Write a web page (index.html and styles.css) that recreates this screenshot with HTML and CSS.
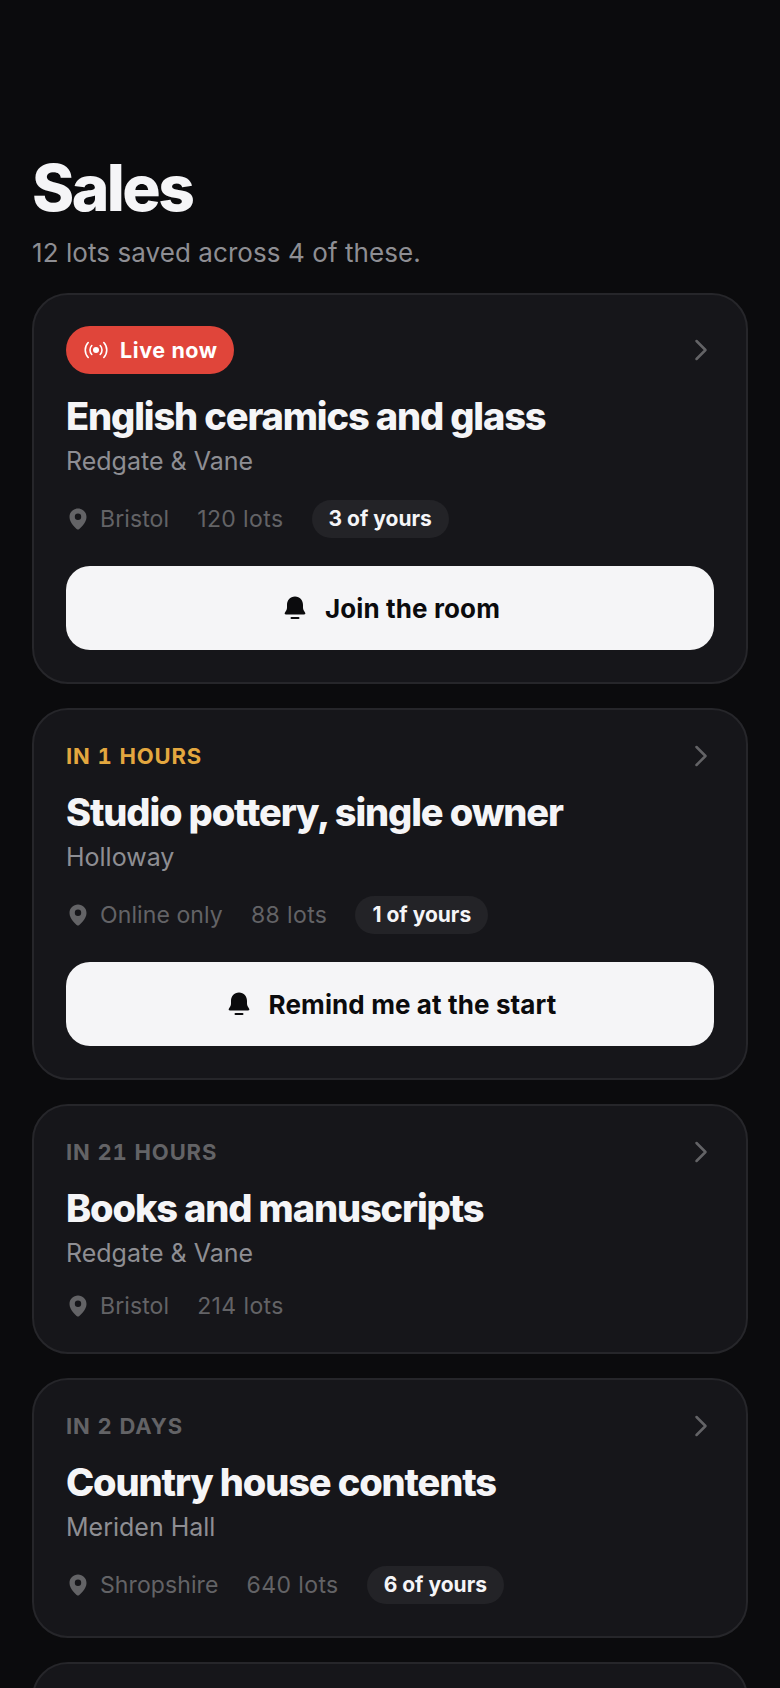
FILE: index.html
```html
<!DOCTYPE html>
<html lang="en">
<head>
<meta charset="utf-8">
<title>Sales</title>
<link rel="stylesheet" href="styles.css">
</head>
<body>
<main class="page">
  <header class="header">
    <h1 class="title">Sales</h1>
    <p class="subtitle">12 lots saved across 4 of these.</p>
  </header>
  <section class="list">
    <article class="card">
      <div class="card-head">
        <span class="pill-live">
          <svg class="icon-live" viewBox="0 0 24 24" fill="none" stroke="currentColor" stroke-width="1.6" stroke-linecap="round"><circle cx="12" cy="12" r="3" fill="currentColor" stroke="none"/><path d="M7.800 7.500a6.500 6.500 0 0 0 0 9"/><path d="M16.200 7.500a6.500 6.500 0 0 1 0 9"/><path d="M4.200 4.500a11 11 0 0 0 0 15"/><path d="M19.800 4.500a11 11 0 0 1 0 15"/></svg>
          Live now
        </span>
        <svg class="chevron" viewBox="0 0 14 22" fill="none" stroke="currentColor" stroke-width="2.5" stroke-linecap="round" stroke-linejoin="round"><path d="M2.500 2 11.500 11l-9 9"/></svg>
      </div>
      <h2 class="card-title">English ceramics and glass</h2>
      <p class="house">Redgate &amp; Vane</p>
      <div class="meta">
        <span class="place"><svg class="pin" viewBox="0 0 24 24" fill="currentColor"><path fill-rule="evenodd" d="M12 1.500c-4.700 0-8.500 3.700-8.500 8.400 0 5.700 6.400 11.400 7.500 12.300.6.500 1.400.5 2 0 1.100-.9 7.500-6.600 7.500-12.300 0-4.700-3.800-8.400-8.500-8.400Zm0 11.500a3.200 3.200 0 1 1 0-6.400 3.200 3.200 0 0 1 0 6.400Z"/></svg>Bristol</span>
        <span class="lots">120 lots</span>
        <span class="tag">3 of yours</span>
      </div>
      <button class="action" type="button"><svg class="bell" viewBox="0 0 24 24" fill="currentColor"><path d="M12 .5c-5 0-8 4-8 8.500v2.500c0 2-1 3.500-2 5-.7 1-.3 2 1 2h18c1.300 0 1.700-1 1-2-1-1.500-2-3-2-5V9c0-4.500-3-8.500-8-8.500Z"/><rect x="7.500" y="21" width="9" height="2" rx="1"/></svg>Join the room</button>
    </article>

    <article class="card">
      <div class="card-head">
        <span class="when when-soon">IN 1 HOURS</span>
        <svg class="chevron" viewBox="0 0 14 22" fill="none" stroke="currentColor" stroke-width="2.5" stroke-linecap="round" stroke-linejoin="round"><path d="M2.500 2 11.500 11l-9 9"/></svg>
      </div>
      <h2 class="card-title">Studio pottery, single owner</h2>
      <p class="house">Holloway</p>
      <div class="meta">
        <span class="place"><svg class="pin" viewBox="0 0 24 24" fill="currentColor"><path fill-rule="evenodd" d="M12 1.500c-4.700 0-8.500 3.700-8.500 8.400 0 5.700 6.400 11.400 7.500 12.300.6.500 1.400.5 2 0 1.100-.9 7.500-6.600 7.500-12.300 0-4.700-3.800-8.400-8.500-8.400Zm0 11.500a3.200 3.200 0 1 1 0-6.400 3.200 3.200 0 0 1 0 6.400Z"/></svg>Online only</span>
        <span class="lots">88 lots</span>
        <span class="tag">1 of yours</span>
      </div>
      <button class="action" type="button"><svg class="bell" viewBox="0 0 24 24" fill="currentColor"><path d="M12 .5c-5 0-8 4-8 8.500v2.500c0 2-1 3.500-2 5-.7 1-.3 2 1 2h18c1.300 0 1.700-1 1-2-1-1.500-2-3-2-5V9c0-4.500-3-8.500-8-8.500Z"/><rect x="7.500" y="21" width="9" height="2" rx="1"/></svg>Remind me at the start</button>
    </article>

    <article class="card">
      <div class="card-head">
        <span class="when">IN 21 HOURS</span>
        <svg class="chevron" viewBox="0 0 14 22" fill="none" stroke="currentColor" stroke-width="2.5" stroke-linecap="round" stroke-linejoin="round"><path d="M2.500 2 11.500 11l-9 9"/></svg>
      </div>
      <h2 class="card-title">Books and manuscripts</h2>
      <p class="house">Redgate &amp; Vane</p>
      <div class="meta">
        <span class="place"><svg class="pin" viewBox="0 0 24 24" fill="currentColor"><path fill-rule="evenodd" d="M12 1.500c-4.700 0-8.500 3.700-8.500 8.400 0 5.700 6.400 11.400 7.500 12.300.6.500 1.400.5 2 0 1.100-.9 7.500-6.600 7.500-12.300 0-4.700-3.800-8.400-8.500-8.400Zm0 11.500a3.200 3.200 0 1 1 0-6.400 3.200 3.200 0 0 1 0 6.400Z"/></svg>Bristol</span>
        <span class="lots">214 lots</span>
      </div>
    </article>

    <article class="card">
      <div class="card-head">
        <span class="when">IN 2 DAYS</span>
        <svg class="chevron" viewBox="0 0 14 22" fill="none" stroke="currentColor" stroke-width="2.5" stroke-linecap="round" stroke-linejoin="round"><path d="M2.500 2 11.500 11l-9 9"/></svg>
      </div>
      <h2 class="card-title">Country house contents</h2>
      <p class="house">Meriden Hall</p>
      <div class="meta">
        <span class="place"><svg class="pin" viewBox="0 0 24 24" fill="currentColor"><path fill-rule="evenodd" d="M12 1.500c-4.700 0-8.500 3.700-8.500 8.400 0 5.700 6.400 11.400 7.500 12.300.6.500 1.400.5 2 0 1.100-.9 7.500-6.600 7.500-12.300 0-4.700-3.800-8.400-8.500-8.400Zm0 11.500a3.200 3.200 0 1 1 0-6.400 3.200 3.200 0 0 1 0 6.400Z"/></svg>Shropshire</span>
        <span class="lots">640 lots</span>
        <span class="tag">6 of yours</span>
      </div>
    </article>

    <article class="card card-next"></article>
  </section>
</main>
</body>
</html>
```

FILE: styles.css
```css
* { box-sizing: border-box; }
html, body { margin: 0; padding: 0; height: 100%; overflow: hidden; background: #0b0b0d; }
body { font-family: Inter, "Liberation Sans", sans-serif; color: #f5f5f7; }
.page { padding: 152px 32px 0; }
.header { margin-bottom: 22px; }
.title { margin: 0; font-size: 64px; line-height: 72px; font-weight: 800; letter-spacing: -2.56px; color: #f5f5f7; }
.subtitle { margin: 11px 0 0; font-size: 26px; line-height: 36px; font-weight: 400; color: #8e8e93; letter-spacing: 0.07px; }
.list { display: flex; flex-direction: column; gap: 24px; }
.card { background: #16161a; border: 2px solid #26262a; border-radius: 36px; padding: 31px 32px 32px; }
.card-next { height: 200px; }
.card-head { display: flex; align-items: center; justify-content: space-between; min-height: 29px; }
.pill-live { display: inline-flex; align-items: center; gap: 12px; height: 48px; padding: 0 16px 0 18px; border-radius: 24px; background: #e0453a; color: #fff; font-size: 21.500px; font-weight: 700; letter-spacing: 0.6px; }
.icon-live { width: 24px; height: 24px; }
.chevron { width: 14px; height: 22px; margin-right: 6px; color: #636366; }
.when { font-size: 22px; line-height: 28px; font-weight: 700; letter-spacing: 0.88px; color: #636366; font-variant-numeric: tabular-nums; }
.when-soon { color: #e3a73f; }
.card-title { margin: 19px 0 0; font-size: 38px; line-height: 46px; font-weight: 800; letter-spacing: -1.14px; color: #f5f5f7; }
.house { margin: 5px 0 0; font-size: 25px; line-height: 34px; color: #8e8e93; }
.meta { display: flex; align-items: center; gap: 28px; margin-top: 22px; font-size: 23px; line-height: 28px; color: #636366; }
.place { display: inline-flex; align-items: center; gap: 10px; letter-spacing: 0.1px; }
.lots { letter-spacing: 0.4px; }
.pin { width: 24px; height: 24px; }
.tag { padding: 0 17px; border-radius: 19px; background: #232327; color: #f5f5f7; font-size: 21px; font-weight: 700; line-height: 38px; }
.action { display: flex; align-items: center; justify-content: center; gap: 18px; width: 100%; height: 84px; margin-top: 28px; padding: 0 0 0 3px; border: 0; border-radius: 24px; background: #f5f5f7; color: #0b0b0d; font-family: inherit; font-size: 26px; font-weight: 700; letter-spacing: 0.12px; }
.bell { width: 24px; height: 24px; }
```
